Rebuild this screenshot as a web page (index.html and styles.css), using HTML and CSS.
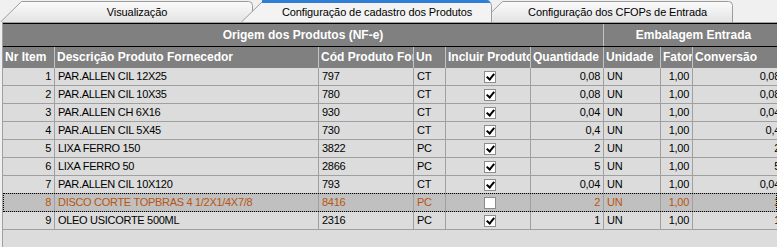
FILE: index.html
```html
<!DOCTYPE html>
<html lang="pt-BR">
<head>
    <meta charset="UTF-8">
    <title>Configuração de cadastro dos Produtos</title>
    <link rel="stylesheet" href="styles.css">
</head>
<body>
    <div class="tabs">
        <div class="tab tab-first">
            <svg class="tab-shape" width="253" height="22">
                <defs>
                    <linearGradient id="tabGrad" x1="0" y1="0" x2="0" y2="1">
                        <stop offset="0" stop-color="#fbfbfb"/>
                        <stop offset="1" stop-color="#e3e3e3"/>
                    </linearGradient>
                </defs>
                <path d="M0.5 22 L21.5 1.5 H248.5 Q252.5 1.5 252.5 5.5 V22" fill="url(#tabGrad)" stroke="#9c9c9c"/>
            </svg>
            <span class="tab-label">Visualização</span>
        </div>
        <div class="tab tab-active">
            <svg class="tab-shape" width="251" height="22">
                <path d="M0.5 22 L21.5 1.5 H246.5 Q250.5 1.5 250.5 5.5 V22" fill="#f3f3f3" stroke="#9c9c9c"/>
                <path d="M21 0 H246 Q249 0 249 3 V3 H21 Z" fill="#2f7fd8"/>
            </svg>
            <span class="tab-label">Configuração de cadastro dos Produtos</span>
        </div>
        <div class="tab tab-last">
            <svg class="tab-shape" width="252" height="22">
                <path d="M0.5 22 L21.5 1.5 H247.5 Q251.5 1.5 251.5 5.5 V22" fill="url(#tabGrad)" stroke="#9c9c9c"/>
            </svg>
            <span class="tab-label">Configuração dos CFOPs de Entrada</span>
        </div>
    </div>

    <div class="grid">
        <div class="group-row">
            <div class="group-cell">Origem dos Produtos (NF-e)</div>
            <div class="group-cell">Embalagem Entrada</div>
        </div>
        <div class="row head-row">
            <div class="cell">Nr Item</div>
            <div class="cell">Descrição Produto Fornecedor</div>
            <div class="cell">Cód Produto Fornecedor</div>
            <div class="cell">Un</div>
            <div class="cell">Incluir Produto</div>
            <div class="cell">Quantidade</div>
            <div class="cell">Unidade</div>
            <div class="cell">Fator</div>
            <div class="cell">Conversão</div>
        </div>

        <div class="row">
            <div class="cell num">1</div><div class="cell">PAR.ALLEN CIL 12X25</div><div class="cell">797</div><div class="cell">CT</div>
            <div class="cell check"><span class="box on"></span></div>
            <div class="cell num">0,08</div><div class="cell">UN</div><div class="cell num">1,00</div><div class="cell num">0,08</div>
        </div>
        <div class="row">
            <div class="cell num">2</div><div class="cell">PAR.ALLEN CIL 10X35</div><div class="cell">780</div><div class="cell">CT</div>
            <div class="cell check"><span class="box on"></span></div>
            <div class="cell num">0,08</div><div class="cell">UN</div><div class="cell num">1,00</div><div class="cell num">0,08</div>
        </div>
        <div class="row">
            <div class="cell num">3</div><div class="cell">PAR.ALLEN CH 6X16</div><div class="cell">930</div><div class="cell">CT</div>
            <div class="cell check"><span class="box on"></span></div>
            <div class="cell num">0,04</div><div class="cell">UN</div><div class="cell num">1,00</div><div class="cell num">0,04</div>
        </div>
        <div class="row">
            <div class="cell num">4</div><div class="cell">PAR.ALLEN CIL 5X45</div><div class="cell">730</div><div class="cell">CT</div>
            <div class="cell check"><span class="box on"></span></div>
            <div class="cell num">0,4</div><div class="cell">UN</div><div class="cell num">1,00</div><div class="cell num">0,4</div>
        </div>
        <div class="row">
            <div class="cell num">5</div><div class="cell">LIXA FERRO 150</div><div class="cell">3822</div><div class="cell">PC</div>
            <div class="cell check"><span class="box on"></span></div>
            <div class="cell num">2</div><div class="cell">UN</div><div class="cell num">1,00</div><div class="cell num">2</div>
        </div>
        <div class="row">
            <div class="cell num">6</div><div class="cell">LIXA FERRO 50</div><div class="cell">2866</div><div class="cell">PC</div>
            <div class="cell check"><span class="box on"></span></div>
            <div class="cell num">5</div><div class="cell">UN</div><div class="cell num">1,00</div><div class="cell num">5</div>
        </div>
        <div class="row">
            <div class="cell num">7</div><div class="cell">PAR.ALLEN CIL 10X120</div><div class="cell">793</div><div class="cell">CT</div>
            <div class="cell check"><span class="box on"></span></div>
            <div class="cell num">0,04</div><div class="cell">UN</div><div class="cell num">1,00</div><div class="cell num">0,04</div>
        </div>
        <div class="row selected">
            <div class="cell num">8</div><div class="cell">DISCO CORTE TOPBRAS 4 1/2X1/4X7/8</div><div class="cell">8416</div><div class="cell">PC</div>
            <div class="cell check"><span class="box"></span></div>
            <div class="cell num">2</div><div class="cell">UN</div><div class="cell num">1,00</div><div class="cell num">2</div>
        </div>
        <div class="row">
            <div class="cell num">9</div><div class="cell">OLEO USICORTE 500ML</div><div class="cell">2316</div><div class="cell">PC</div>
            <div class="cell check"><span class="box on"></span></div>
            <div class="cell num">1</div><div class="cell">UN</div><div class="cell num">1,00</div><div class="cell num">1</div>
        </div>
    </div>
</body>
</html>
```

FILE: styles.css
```css
body {
    margin: 0;
    width: 777px;
    height: 247px;
    overflow: hidden;
    background: #f0f0f0;
    font-family: "Liberation Sans", Arial, sans-serif;
}

.tabs {
    display: flex;
    height: 22px;
}

.tab {
    position: relative;
    height: 22px;
    flex: none;
}

.tab-shape {
    position: absolute;
    left: 0;
    top: 0;
}

.tab-label {
    position: relative;
    display: block;
    padding-left: 21px;
    line-height: 24px;
    text-align: center;
    font-size: 11px;
    letter-spacing: -0.1px;
    color: #000;
    white-space: nowrap;
}

.tab-first {
    width: 253px;
    z-index: 1;
}

.tab-active {
    width: 251px;
    margin-left: -12px;
    z-index: 2;
}

.tab-last {
    width: 252px;
    margin-left: -11px;
    z-index: 0;
}

.grid {
    margin-left: 2px;
    height: 225px;
    border-top: 1px solid #a0a0a0;
    border-left: 1px solid #a0a0a0;
    background: #dcdcdc;
}

.group-row {
    display: grid;
    grid-template-columns: 601px 180px;
    border-top: 1px solid #000;
    border-bottom: 1px solid #000;
    background: #808080;
}

.group-cell {
    height: 22px;
    line-height: 22px;
    text-align: center;
    color: #fff;
    font-weight: bold;
    font-size: 12px;
    border-right: 1px solid #c4c4c4;
    box-sizing: border-box;
}

.row {
    display: grid;
    grid-template-columns: 52px 264px 95px 32px 85px 73px 57px 32px 91px;
    border-bottom: 1px solid #a0a0a0;
    position: relative;
}

.cell {
    height: 17px;
    line-height: 17px;
    padding: 0 2px 0 3px;
    border-right: 1px solid #a0a0a0;
    box-sizing: border-box;
    font-size: 11px;
    letter-spacing: -0.3px;
    color: #000;
    white-space: nowrap;
    overflow: hidden;
}

.num {
    text-align: right;
    padding: 0 3px 0 2px;
}

.head-row {
    background: #808080;
    border-bottom: none;
}

.head-row .cell {
    height: 21px;
    line-height: 21px;
    color: #fff;
    font-weight: bold;
    font-size: 12px;
    letter-spacing: 0;
    padding: 0 0 0 2px;
    border-right-color: #c4c4c4;
}

.check {
    display: flex;
    align-items: center;
    justify-content: center;
}

.box {
    display: block;
    width: 10px;
    height: 10px;
    border: 1px solid #8c8c8c;
    background: #fff;
    position: relative;
    left: 1px;
}

.box.on::after {
    content: "";
    position: absolute;
    left: 3px;
    top: 0;
    width: 3px;
    height: 6px;
    border: solid #000;
    border-width: 0 2px 2px 0;
    transform: rotate(40deg);
}

.selected {
    background: #c0c0c0;
}

.selected .cell {
    color: #b8560f;
}

.selected::after {
    content: "";
    position: absolute;
    left: 0;
    right: 0;
    top: -1px;
    bottom: -1px;
    border: 1px dotted #000;
}
```
